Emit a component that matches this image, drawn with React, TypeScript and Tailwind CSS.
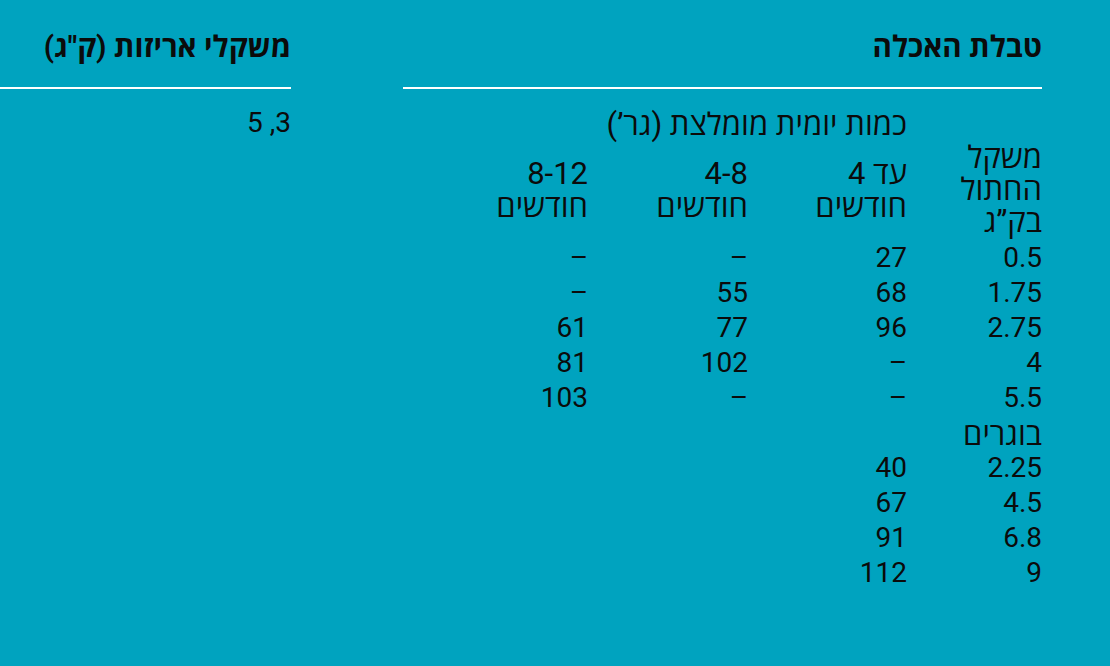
import React from "react";

const rows: [string, string, string, string][] = [
  ["0.5", "27", "–", "–"],
  ["1.75", "68", "55", "–"],
  ["2.75", "96", "77", "61"],
  ["4", "–", "102", "81"],
  ["5.5", "–", "–", "103"],
];
const adults: [string, string][] = [
  ["2.25", "40"],
  ["4.5", "67"],
  ["6.8", "91"],
  ["9", "112"],
];

export default function App() {
  return (
    <div
      dir="rtl"
      className="w-[1110px] h-[666px] bg-[#00a3bf] text-[#0b0b0b] flex overflow-hidden"
      style={{ fontFamily: 'Roboto, "Open Sans", "Liberation Sans", sans-serif' }}
    >
      <div className="w-[68px] shrink-0" />
      {/* Main table */}
      <div className="w-[639px] shrink-0 flex flex-col">
        <div className="h-[87px] flex items-end pb-[23px]">
          <h2 className="text-[29.5px] font-bold leading-[34px]">טבלת האכלה</h2>
        </div>
        <div className="h-[2px] bg-white" />
        <div className="grid grid-cols-[135px_159px_160px_1fr] text-[28px] leading-[35px] mt-[18px]">
          <div />
          <div className="col-span-3 text-[31px] leading-[35px]">כמות יומית מומלצת (גר’)</div>
          <div className="col-span-4 grid grid-cols-[135px_159px_160px_1fr] items-center text-[31px] leading-[32px] mb-[2px]">
            <div>
              משקל
              <br />
              החתול
              <br />
              בק”ג
            </div>
            <div className="leading-[33px]">
              עד 4
              <br />
              חודשים
            </div>
            <div className="leading-[33px]">
              4-8
              <br />
              חודשים
            </div>
            <div className="leading-[33px]">
              8-12
              <br />
              חודשים
            </div>
          </div>
          {rows.map((r, i) => (
            <React.Fragment key={i}>
              {r.map((c, j) => (
                <div key={j}>{c}</div>
              ))}
            </React.Fragment>
          ))}
          <div className="col-span-4 h-[35px] flex items-end text-[31px] leading-[31px]">בוגרים</div>
          {adults.map((r, i) => (
            <React.Fragment key={i}>
              <div>{r[0]}</div>
              <div>{r[1]}</div>
              <div />
              <div />
            </React.Fragment>
          ))}
        </div>
      </div>
      <div className="w-[112px] shrink-0" />
      {/* Side column */}
      <div className="w-[291px] shrink-0 flex flex-col">
        <div className="h-[87px] flex items-end pb-[23px]">
          <h2 className="text-[29.5px] font-bold leading-[34px]">משקלי אריזות (ק"ג)</h2>
        </div>
        <div className="h-[2px] bg-white" />
        <div className="text-[28px] leading-[35px] mt-[16px]">3, 5</div>
      </div>
    </div>
  );
}
